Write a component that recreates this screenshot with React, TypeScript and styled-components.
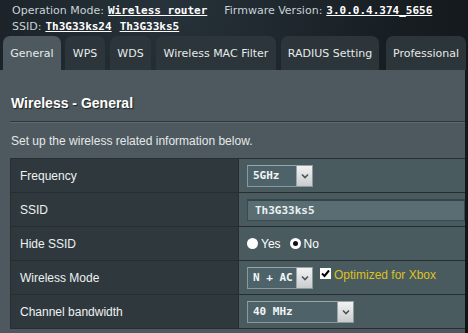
import React from 'react'
import styled, { createGlobalStyle } from 'styled-components'

const GlobalStyle = createGlobalStyle`
  html, body {
    margin: 0;
    padding: 0;
    background: #14191c;
  }
  #root {
    width: 468px;
    height: 333px;
    overflow: hidden;
  }
`

const Page = styled.div`
  width: 468px;
  height: 333px;
  overflow: hidden;
  background: radial-gradient(ellipse at 35% 0%, #27323a 0, #161c20 60%, #0f1316 100%);
`

const Header = styled.div`
  padding: 2px 0 0 12px;
  height: 34px;
  box-sizing: border-box;
  font-family: 'DejaVu Sans', Verdana, sans-serif;
  font-size: 11px;
  color: #c9d2d6;
`

const HeaderLine = styled.div`
  display: flex;
  align-items: center;
  height: 16px;
  white-space: nowrap;
`

const Label = styled.span<{ $gap?: number }>`
  margin-left: ${({ $gap }) => $gap ?? 0}px;
`

const Value = styled.span<{ $gap?: number }>`
  margin-left: ${({ $gap }) => $gap ?? 4}px;
  font-family: 'DejaVu Sans Mono', 'Liberation Mono', monospace;
  font-weight: bold;
  color: #ffffff;
  text-decoration: underline;
`

const Tabs = styled.div`
  display: flex;
  gap: 4px;
  padding-left: 3px;
  height: 36px;
  align-items: flex-end;
`

const Tab = styled.div<{ $active?: boolean; $width: number; $gap?: number }>`
  width: ${({ $width }) => $width}px;
  margin-left: ${({ $gap }) => $gap ?? 0}px;
  height: 34px;
  display: flex;
  align-items: center;
  justify-content: center;
  border-radius: 7px 7px 0 0;
  background: ${({ $active }) => ($active ? '#4d595e' : '#2c3539')};
  font-family: 'DejaVu Sans', Verdana, sans-serif;
  font-size: 11px;
  color: #e6eaeb;
  white-space: nowrap;
`

const Panel = styled.div`
  width: 465px;
  height: 263px;
  background: #4d595e;
  padding: 24px 0 0 10px;
  box-sizing: border-box;
  font-family: 'Liberation Sans', Arial, sans-serif;
`

const Title = styled.div`
  font-size: 14px;
  font-weight: bold;
  color: #ffffff;
  line-height: 18px;
  margin-left: 1px;
  text-shadow: 1px 1px 1px #1b2124;
`

const Rule = styled.div`
  margin-top: 9px;
  height: 1px;
  background: #2e373b;
  border-bottom: 1px solid #5d696e;
`

const Description = styled.div`
  margin: 10px 0 0 1px;
  font-size: 12px;
  line-height: 16px;
  color: #e4e8e9;
`

const Table = styled.div`
  margin-top: 9px;
  border-top: 1px solid #262e31;
  border-left: 1px solid #262e31;
`

const Row = styled.div`
  display: grid;
  grid-template-columns: 228px 1fr;
  height: 33px;
  border-bottom: 1px solid #262e31;
`

const Th = styled.div`
  display: flex;
  align-items: center;
  padding-left: 9px;
  background: #2f393d;
  border-right: 1px solid #262e31;
  font-size: 12px;
  color: #eef1f2;
`

const Td = styled.div`
  display: flex;
  align-items: center;
  gap: 7px;
  padding-left: 8px;
  background: #4a5b60;
  font-size: 12px;
  color: #ffffff;
`

const Select = styled.div<{ $width: number }>`
  width: ${({ $width }) => $width}px;
  height: 22px;
  display: flex;
  box-sizing: border-box;
  border: 1px solid #8b999d;
  border-top-color: #97a5a9;
  background: #4e6369;
`

const SelectText = styled.div`
  flex: 1;
  display: flex;
  align-items: center;
  padding-left: 5px;
  font-family: 'DejaVu Sans Mono', 'Liberation Mono', monospace;
  font-weight: bold;
  font-size: 11px;
  color: #f2f6f6;
  white-space: pre;
`

const SelectArrow = styled.div`
  width: 15px;
  display: flex;
  align-items: center;
  justify-content: center;
  background: linear-gradient(#f2f2f2, #c9cccd);
  border-left: 1px solid #9aa5a8;
`

const TextInput = styled.div`
  flex: 1;
  height: 22px;
  box-sizing: border-box;
  display: flex;
  align-items: center;
  padding-left: 7px;
  border: 1px solid #3a4a4f;
  border-top: 2px solid #34454a;
  background: #596d72;
  font-family: 'DejaVu Sans Mono', 'Liberation Mono', monospace;
  font-weight: bold;
  font-size: 11px;
  color: #e9f1f2;
`

const RadioGroup = styled.label`
  display: flex;
  align-items: center;
  gap: 3px;
  margin-right: 2px;
`

const Radio = styled.span<{ $checked?: boolean }>`
  width: 11px;
  height: 11px;
  border-radius: 50%;
  background: #ffffff;
  box-sizing: border-box;
  display: flex;
  align-items: center;
  justify-content: center;

  &::after {
    content: '';
    display: ${({ $checked }) => ($checked ? 'block' : 'none')};
    width: 5px;
    height: 5px;
    border-radius: 50%;
    background: #111;
  }
`

const Check = styled.span`
  width: 11px;
  height: 11px;
  background: #ffffff;
  display: flex;
  align-items: center;
  justify-content: center;
  margin-top: -8px;
`

const XboxLabel = styled.span`
  margin-left: -4px;
  margin-top: -6px;
  color: #dcc21e;
  font-size: 12px;
`

function Arrow() {
  return (
    <svg width="8" height="6" viewBox="0 0 8 6">
      <path d="M1 1.5 L4 4.5 L7 1.5" fill="none" stroke="#4a5458" strokeWidth="1.6" />
    </svg>
  )
}

function Dropdown({ value, width }: { value: string; width: number }) {
  return (
    <Select $width={width}>
      <SelectText>{value}</SelectText>
      <SelectArrow>
        <Arrow />
      </SelectArrow>
    </Select>
  )
}

export default function App() {
  return (
    <Page>
      <GlobalStyle />
      <Header>
        <HeaderLine>
          <Label>Operation Mode:</Label>
          <Value>Wireless router</Value>
          <Label $gap={17}>Firmware Version:</Label>
          <Value>3.0.0.4.374_5656</Value>
        </HeaderLine>
        <HeaderLine>
          <Label>SSID:</Label>
          <Value>Th3G33ks24</Value>
          <Value $gap={8}>Th3G33ks5</Value>
        </HeaderLine>
      </Header>

      <Tabs>
        <Tab $active $width={58}>General</Tab>
        <Tab $width={40}>WPS</Tab>
        <Tab $width={41} $gap={1}>WDS</Tab>
        <Tab $width={120} $gap={1}>Wireless MAC Filter</Tab>
        <Tab $width={98} $gap={1}>RADIUS Setting</Tab>
        <Tab $width={80} $gap={3}>Professional</Tab>
      </Tabs>

      <Panel>
        <Title>Wireless - General</Title>
        <Rule />
        <Description>Set up the wireless related information below.</Description>

        <Table>
          <Row>
            <Th>Frequency</Th>
            <Td>
              <Dropdown value="5GHz" width={66} />
            </Td>
          </Row>
          <Row>
            <Th>SSID</Th>
            <Td>
              <TextInput>Th3G33ks5</TextInput>
            </Td>
          </Row>
          <Row>
            <Th>Hide SSID</Th>
            <Td>
              <RadioGroup>
                <Radio />
                Yes
              </RadioGroup>
              <RadioGroup>
                <Radio $checked />
                No
              </RadioGroup>
            </Td>
          </Row>
          <Row>
            <Th>Wireless Mode</Th>
            <Td>
              <Dropdown value="N + AC" width={66} />
              <Check>
                <svg width="9" height="9" viewBox="0 0 9 9">
                  <path d="M1 4.5 L3.5 7 L8 1.5" fill="none" stroke="#000" strokeWidth="2" />
                </svg>
              </Check>
              <XboxLabel>Optimized for Xbox</XboxLabel>
            </Td>
          </Row>
          <Row>
            <Th>Channel bandwidth</Th>
            <Td>
              <Dropdown value="40 MHz" width={107} />
            </Td>
          </Row>
        </Table>
      </Panel>
    </Page>
  )
}
